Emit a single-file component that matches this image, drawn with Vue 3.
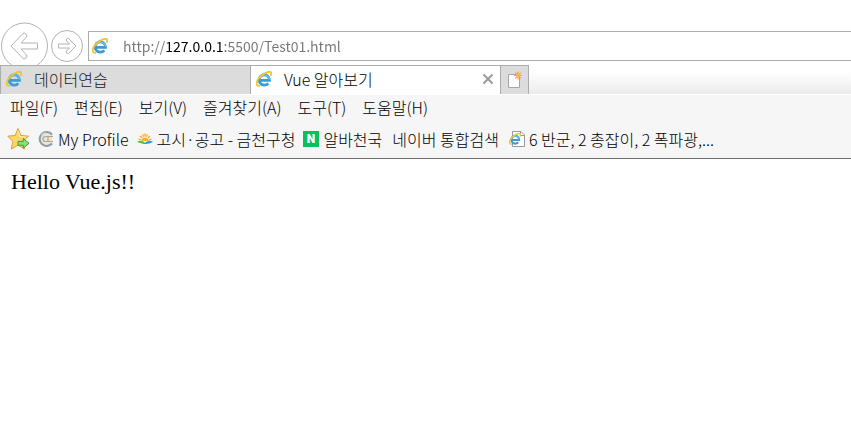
<template>
    <div class="browser">
        <!-- 주소 표시줄 -->
        <header class="nav-bar">
            <button class="nav-button back" aria-label="뒤로">
                <svg viewBox="0 0 48 48">
                    <circle cx="24.500" cy="24" r="23" />
                    <path d="M11 24 23 11.500Q24.500 10.500 26 12Q27.500 13.500 26.500 15L21 21H37.500V27H21L26.500 33Q27.500 34.500 26 36Q24.500 37.500 23 36.500Z" />
                </svg>
            </button>
            <button class="nav-button forward" aria-label="앞으로">
                <svg viewBox="0 0 32 32">
                    <circle cx="16" cy="16" r="15.500" />
                    <path d="M25 16 17.500 8.500Q16.500 8 15.500 9Q14.800 10 15.500 11L18.500 14H7.500V18H18.500L15.500 21Q14.800 22 15.500 23Q16.500 24 17.500 23.500Z" />
                </svg>
            </button>
            <div class="address-box">
                <svg class="icon" viewBox="0 0 16 16"><use href="#ie-logo" /></svg>
                <input v-model="url" class="address-input" type="text" aria-label="주소" spellcheck="false">
            </div>
        </header>

        <!-- 탭 -->
        <nav class="tab-bar">
            <div v-for="(tab, index) in tabs" :key="tab" class="tab" :class="{ active: index === current }">
                <button class="tab-title" @click="current = index">
                    <svg class="icon" viewBox="0 0 16 16"><use href="#ie-logo" /></svg>
                    <span>{{ tab }}</span>
                </button>
                <button v-if="index === current" class="tab-close" aria-label="탭 닫기">
                    <svg viewBox="0 0 12 12"><path d="M1.500 1.500 10.500 10.500M10.500 1.500 1.500 10.500" /></svg>
                </button>
            </div>
            <button class="new-tab" aria-label="새 탭">
                <svg viewBox="0 0 16 18">
                    <path d="M1.500 3.500H12.500V16.500H1.500Z" fill="#fdfdfd" stroke="#a5a5a5" />
                    <path d="M11 0.500V8.500M7 4.500H15M8.200 1.700 13.800 7.300M13.800 1.700 8.200 7.300" stroke="#eda53c" stroke-width="1.200" />
                    <circle cx="11" cy="4.500" r="2.200" fill="#f8b84f" />
                </svg>
            </button>
        </nav>

        <!-- 메뉴 -->
        <div class="menu-bar">
            <button v-for="menu in menus" :key="menu" class="menu-item">{{ menu }}</button>
        </div>

        <!-- 즐겨찾기 모음 -->
        <div class="favorites-bar">
            <button class="add-favorite" aria-label="즐겨찾기 모음에 추가">
                <svg viewBox="0 0 24 24">
                    <path d="M11.500 1 14.500 8.300 22.500 9 16.500 14.300 18.500 22.500 11.500 18.500 4.500 22.500 6 14.300 0.800 9 8.500 8.300Z" fill="#fcd668" stroke="#dc9b3b" stroke-linejoin="round" />
                    <path d="M11.500 3.500 13.500 9.500 19.500 10" fill="none" stroke="#fff0b0" />
                    <path d="M11.500 14.500H17V11.500L23 16.500 17 21.500V18.500H11.500Z" fill="#8be070" stroke="#2e9b3c" stroke-linejoin="round" />
                </svg>
            </button>
            <a v-for="item in favorites" :key="item.name" class="favorite" :class="{ plain: !item.icon }" href="#">
                <svg v-if="item.icon === 'profile'" class="icon" viewBox="0 0 16 16">
                    <path d="M14.500 3.500A7.300 7.300 0 1 0 14.500 12.500Z" fill="#e4e6e6" />
                    <path d="M14 3.500A7 7 0 1 0 14 12.500" fill="none" stroke="#929a9e" stroke-width="2" />
                    <path d="M3.500 4.500A6 6 0 0 1 8 2" fill="none" stroke="#d3d7d9" stroke-width="1.500" />
                    <path d="M15 5.500H7.500A2.500 2.500 0 0 0 7.500 10.500H15M10 5.500V10.500" fill="none" stroke="#b5a77c" stroke-width="1.200" />
                </svg>
                <svg v-else-if="item.icon === 'sun'" class="icon" viewBox="0 0 16 16">
                    <path d="M4.500 10A3.500 3.500 0 0 1 11.500 10Z" fill="#f8b02d" />
                    <path d="M1.500 8 4 9M3 4.800 5.200 7M5.700 3.200 6.500 5.800M8 2.500V5.500M10.300 3.200 9.500 5.800M13 4.800 10.800 7M14.500 8 12 9" stroke="#f6a42a" stroke-width="1.200" />
                    <path d="M0 11Q4 8.500 8 11.500Q4 13 0 11Z" fill="#65b84b" />
                    <path d="M4 12.500Q8 12.500 10 10.500Q13 9 16 11Q11 14 4 12.500Z" fill="#2b9fd5" />
                </svg>
                <svg v-else-if="item.icon === 'naver'" class="icon" viewBox="0 0 16 16">
                    <rect width="16" height="16" fill="#07c160" />
                    <text class="naver-letter" x="8" y="12" text-anchor="middle">N</text>
                </svg>
                <svg v-else-if="item.icon === 'page'" class="icon" viewBox="0 0 16 16">
                    <path d="M3.500 0.500H12L15.500 4V15.500H3.500Z" fill="#fff" stroke="#999" />
                    <path d="M11.500 0.500V4.500H15.500" fill="none" stroke="#999" />
                    <svg x="0" y="2" width="12" height="12" viewBox="0 0 16 16"><use href="#ie-logo" /></svg>
                </svg>
                <span>{{ item.name }}</span>
            </a>
        </div>

        <main class="page">{{ message }}</main>

        <svg class="symbols" aria-hidden="true">
            <symbol id="ie-logo" viewBox="0 0 16 16">
                <path d="M4.500 9.300H13.500A5.200 5.200 0 1 0 12.300 12.300" fill="none" stroke="#3a9bd6" stroke-width="2.800" />
                <path d="M3.500 7.500A5.200 5.200 0 0 1 13.500 8.500" fill="none" stroke="#62bdea" stroke-width="1.600" />
                <path d="M4 14.800C-1 15.500 0 9.500 5 5C9.500 0.800 14.800 -0.400 15.200 2C15.300 3 15 4 14.500 4.800" fill="none" stroke="#f2c230" stroke-width="1.800" />
            </symbol>
        </svg>
    </div>
</template>

<script setup>
import { ref } from 'vue';

const message = ref('Hello Vue.js!!');
const url = ref('http://127.0.0.1:5500/Test01.html');
const current = ref(1);

const tabs = ['데이터연습', 'Vue 알아보기'];
const menus = ['파일(F)', '편집(E)', '보기(V)', '즐겨찾기(A)', '도구(T)', '도움말(H)'];

const favorites = [
    { name: 'My Profile', icon: 'profile' },
    { name: '고시·공고 - 금천구청', icon: 'sun' },
    { name: '알바천국', icon: 'naver' },
    { name: '네이버 통합검색', icon: '' },
    { name: '6 반군, 2 총잡이, 2 폭파광,...', icon: 'page' }
];
</script>

<style>
body {
    margin: 0;
    background: #fff;
}
</style>

<style scoped>
.browser {
    font-family: "Noto Sans CJK KR", sans-serif;
    font-size: 16px;
    font-weight: 300;
    line-height: 24px;
    color: #000;
}

button {
    display: flex;
    align-items: center;
    padding: 0;
    border: none;
    background: none;
    font: inherit;
    color: inherit;
    cursor: pointer;
}

.icon {
    flex: none;
    width: 16px;
    height: 16px;
}

.symbols {
    display: block;
    width: 0;
    height: 0;
}

/* 주소 표시줄 */
.nav-bar {
    display: flex;
    align-items: center;
    height: 46px;
    padding-top: 23px;
    margin-bottom: -4px;
}

.nav-button {
    flex: none;
}

.nav-button svg {
    display: block;
    width: 100%;
    fill: #fff;
    stroke: #b2b2b2;
    stroke-width: 1;
}

.back {
    width: 48px;
}

.forward {
    width: 32px;
    margin: 0 5px 0 3px;
}

.address-box {
    display: flex;
    flex: 1;
    align-items: center;
    gap: 15px;
    height: 28px;
    padding-left: 3px;
    border: 1px solid #acacac;
    border-right: none;
}

.address-input {
    flex: 1;
    min-width: 0;
    padding: 0;
    border: none;
    outline: none;
    font-family: "Noto Sans CJK KR", sans-serif;
    font-size: 14px;
    color: transparent;
    caret-color: #000;
    /* 호스트 부분만 진하게 */
    background: linear-gradient(to right, #777 42px, #000 42px, #000 100px, #777 100px);
    background-clip: text;
}

/* 탭 */
.tab-bar {
    position: relative;
    display: flex;
    height: 29px;
    background: linear-gradient(#fff 20%, #ececec);
    border-bottom: 1px solid #fff;
}

.tab {
    display: flex;
    flex: 0 1 250px;
    box-sizing: border-box;
    min-width: 0;
    padding: 0 6px 2px 5px;
    background: #dcdcdc;
    border: 1px solid #acacac;
    border-width: 1px 0 0 1px;
    color: #222;
}

.tab.active {
    background: #fff;
    color: #000;
}

.tab-title {
    flex: 1;
    gap: 12px;
    white-space: nowrap;
}

.tab-close svg {
    width: 12px;
    height: 12px;
    stroke: #999;
    stroke-width: 2;
}

.new-tab {
    box-sizing: border-box;
    justify-content: center;
    width: 29px;
    background: #dcdcdc;
    border: 1px solid #acacac;
    border-bottom: none;
}

.new-tab svg {
    width: 16px;
    height: 18px;
    fill: none;
}

/* 메뉴 */
.menu-bar {
    display: flex;
    gap: 16px;
    padding: 0 10px 2px;
    background: #f6f6f6;
}

/* 즐겨찾기 모음 */
.favorites-bar {
    display: flex;
    align-items: center;
    gap: 8px;
    height: 35px;
    padding: 0 7px 2px;
    background: #f6f6f6;
    border-bottom: 1px solid #6d6d6d;
    white-space: nowrap;
}

.add-favorite svg {
    width: 23px;
    height: 24px;
}

.favorite {
    display: flex;
    align-items: center;
    gap: 4px;
    color: inherit;
    text-decoration: none;
}

/* 아이콘 없는 항목 */
.favorite.plain {
    padding: 0 2px;
}

.naver-letter {
    font-family: Roboto, sans-serif;
    font-size: 12px;
    font-weight: 900;
    fill: #fff;
}

/* 본문 */
.page {
    padding: 11px;
    font-family: "Liberation Serif", "Noto Sans CJK KR", serif;
    font-size: 22px;
    color: #000;
}
</style>
